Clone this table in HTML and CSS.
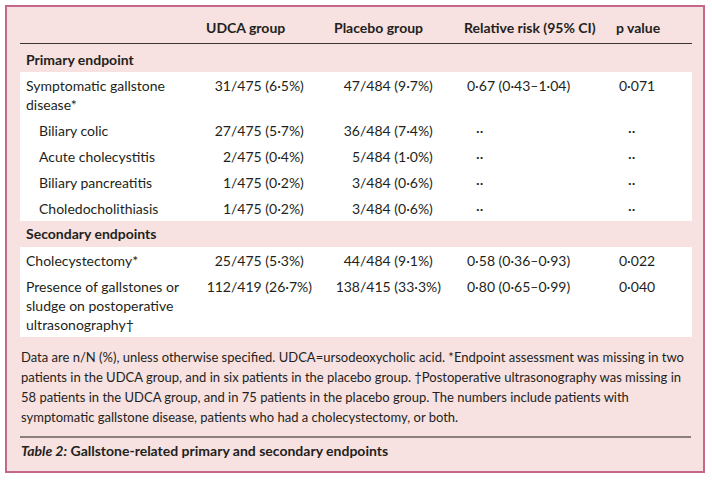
FILE: index.html
```html
<!DOCTYPE html>
<html lang="en">
<head>
<meta charset="utf-8">
<title>Table 2</title>
<link rel="stylesheet" href="styles.css">
</head>
<body>
<div class="panel">
  <table class="data">
    <colgroup>
      <col class="c1"><col class="c2"><col class="c3"><col class="c4"><col class="c5">
    </colgroup>
    <thead>
      <tr>
        <th></th>
        <th class="h2">UDCA group</th>
        <th class="h3">Placebo group</th>
        <th class="h4">Relative risk (95% CI)</th>
        <th class="h5">p value</th>
      </tr>
    </thead>
    <tbody>
      <tr class="section first"><td colspan="5">Primary endpoint</td></tr>
      <tr class="band">
        <td class="lab">Symptomatic gallstone disease*</td>
        <td class="u"><span class="n">31</span>/475 (6·5%)</td>
        <td class="p"><span class="n">47</span>/484 (9·7%)</td>
        <td class="rr">0·67 (0·43–1·04)</td>
        <td class="pv">0·071</td>
      </tr>
      <tr class="band">
        <td class="lab sub">Biliary colic</td>
        <td class="u"><span class="n">27</span>/475 (5·7%)</td>
        <td class="p"><span class="n">36</span>/484 (7·4%)</td>
        <td class="rr dd">··</td>
        <td class="pv dd">··</td>
      </tr>
      <tr class="band">
        <td class="lab sub">Acute cholecystitis</td>
        <td class="u"><span class="n">2</span>/475 (0·4%)</td>
        <td class="p"><span class="n">5</span>/484 (1·0%)</td>
        <td class="rr dd">··</td>
        <td class="pv dd">··</td>
      </tr>
      <tr class="band">
        <td class="lab sub">Biliary pancreatitis</td>
        <td class="u"><span class="n">1</span>/475 (0·2%)</td>
        <td class="p"><span class="n">3</span>/484 (0·6%)</td>
        <td class="rr dd">··</td>
        <td class="pv dd">··</td>
      </tr>
      <tr class="band">
        <td class="lab sub">Choledocholithiasis</td>
        <td class="u"><span class="n">1</span>/475 (0·2%)</td>
        <td class="p"><span class="n">3</span>/484 (0·6%)</td>
        <td class="rr dd">··</td>
        <td class="pv dd">··</td>
      </tr>
      <tr class="section"><td colspan="5">Secondary endpoints</td></tr>
      <tr class="band">
        <td class="lab">Cholecystectomy*</td>
        <td class="u"><span class="n">25</span>/475 (5·3%)</td>
        <td class="p"><span class="n">44</span>/484 (9·1%)</td>
        <td class="rr">0·58 (0·36–0·93)</td>
        <td class="pv">0·022</td>
      </tr>
      <tr class="band">
        <td class="lab">Presence of gallstones or sludge on postoperative ultrasonography†</td>
        <td class="u"><span class="n">112</span>/419 (26·7%)</td>
        <td class="p"><span class="n">138</span>/415 (33·3%)</td>
        <td class="rr">0·80 (0·65–0·99)</td>
        <td class="pv">0·040</td>
      </tr>
    </tbody>
  </table>
  <p class="notes">Data are n/N (%), unless otherwise specified. UDCA=ursodeoxycholic acid. *Endpoint assessment was missing in two patients in the UDCA group, and in six patients in the placebo group. †Postoperative ultrasonography was missing in 58 patients in the UDCA group, and in 75 patients in the placebo group. The numbers include patients with symptomatic gallstone disease, patients who had a cholecystectomy, or both.</p>
  <p class="caption"><em>Table 2:</em> Gallstone-related primary and secondary endpoints</p>
</div>
</body>
</html>
```

FILE: styles.css
```css
html, body {
  margin: 0;
  padding: 0;
  background: #ffffff;
}

body {
  font-family: "Lato", "Open Sans", sans-serif;
  color: #231f20;
}

.panel {
  box-sizing: border-box;
  margin: 5px 0 0 5px;
  width: 700px;
  padding: 0 12px 10px 13px;
  background: #f7e1e1;
  border: 2px solid #c4678a;
}

.data {
  width: 672px;
  border-collapse: collapse;
  table-layout: fixed;
  font-size: 14px;
  line-height: 19px;
}

.c1 { width: 180px; }
.c2 { width: 130px; }
.c3 { width: 130px; }
.c4 { width: 152px; }
.c5 { width: 80px; }

th, td {
  padding: 0;
  text-align: left;
  vertical-align: top;
  font-weight: normal;
}

thead th {
  font-weight: bold;
  padding-top: 11px;
  padding-bottom: 6px;
  border-bottom: 1px solid #3a3434;
}

.h2 { padding-left: 6px; }
.h3 { padding-left: 4px; }
.h4 { padding-left: 4px; }
.h5 { padding-left: 4px; }

.section td {
  font-weight: bold;
  padding: 3px 0 4px 6px;
}

.section.first td {
  padding: 6px 0 3px 6px;
}

.band td {
  background: #ffffff;
  padding-top: 3.5px;
  padding-bottom: 3.5px;
}

.lab { padding-left: 6px !important; padding-right: 8px !important; }
.lab.sub { padding-left: 19px !important; }

.n {
  display: inline-block;
  text-align: right;
}

.u .n { width: 31px; }
.p .n { width: 30px; }

.rr { padding-left: 7px !important; }
.pv { padding-left: 7px !important; }
.rr.dd, .pv.dd { padding-left: 16px !important; }

.notes {
  margin: 10px 0 0 0;
  font-size: 13px;
  line-height: 20px;
  padding-left: 1px;
}

.caption {
  margin: 9px 0 0 0;
  padding-top: 3px;
  border-top: 2px solid #8c7d7e;
  font-size: 14px;
  line-height: 20px;
  font-weight: bold;
  padding-left: 1px;
}

.caption em {
  font-style: italic;
}
```
